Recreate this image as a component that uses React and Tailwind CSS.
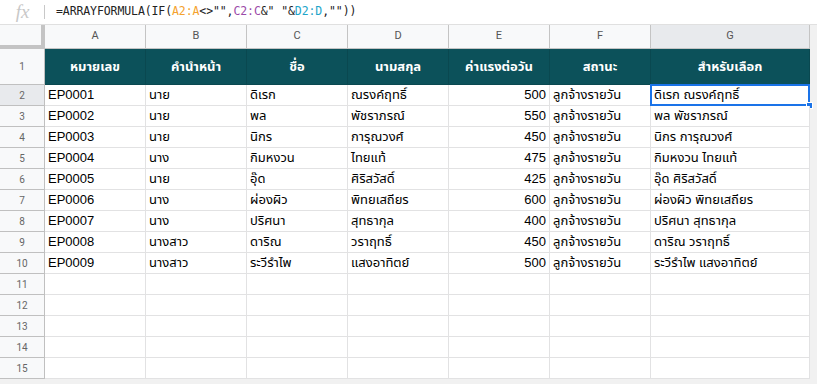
import React from "react";

const rows = [
  ["EP0001", "นาย", "ดิเรก", "ณรงค์ฤทธิ์", "500", "ลูกจ้างรายวัน", "ดิเรก ณรงค์ฤทธิ์"],
  ["EP0002", "นาย", "พล", "พัชราภรณ์", "550", "ลูกจ้างรายวัน", "พล พัชราภรณ์"],
  ["EP0003", "นาย", "นิกร", "การุณวงศ์", "450", "ลูกจ้างรายวัน", "นิกร การุณวงศ์"],
  ["EP0004", "นาง", "กิมหงวน", "ไทยแท้", "475", "ลูกจ้างรายวัน", "กิมหงวน ไทยแท้"],
  ["EP0005", "นาย", "อุ๊ด", "ศิริสวัสดิ์", "425", "ลูกจ้างรายวัน", "อุ๊ด ศิริสวัสดิ์"],
  ["EP0006", "นาง", "ผ่องผิว", "พิทยเสถียร", "600", "ลูกจ้างรายวัน", "ผ่องผิว พิทยเสถียร"],
  ["EP0007", "นาง", "ปริศนา", "สุทธากุล", "400", "ลูกจ้างรายวัน", "ปริศนา สุทธากุล"],
  ["EP0008", "นางสาว", "ดาริณ", "วราฤทธิ์", "450", "ลูกจ้างรายวัน", "ดาริณ วราฤทธิ์"],
  ["EP0009", "นางสาว", "ระวีรำไพ", "แสงอาทิตย์", "500", "ลูกจ้างรายวัน", "ระวีรำไพ แสงอาทิตย์"],
];

const headers = ["หมายเลข", "คำนำหน้า", "ชื่อ", "นามสกุล", "ค่าแรงต่อวัน", "สถานะ", "สำหรับเลือก"];
const letters = ["A", "B", "C", "D", "E", "F", "G"];
const widths = ["w-[101px]", "w-[101px]", "w-[101px]", "w-[101px]", "w-[101px]", "w-[101px]", "w-[159px]"];

const font = "font-['Liberation_Sans','Noto_Sans_Thai','Noto_Sans',sans-serif]";

function RowNum({ n, h, selected }) {
  return (
    <div
      className={`w-[45px] ${h} shrink-0 flex items-center justify-center border-r border-b border-r-[#c0c0c0] border-b-[#c0c0c0] text-[10px] text-[#666] font-['Roboto',sans-serif] ${
        selected ? "bg-[#e8eaed]" : "bg-[#f8f9fa]"
      }`}
    >
      {n}
    </div>
  );
}

export default function App() {
  return (
    <div className={`w-[817px] h-[384px] overflow-hidden bg-[#f1f1f1] ${font}`}>
      {/* formula bar */}
      <div className="h-[25px] bg-white border-b border-[#e0e0e0] flex items-center">
        <div className="w-[45px] h-full flex items-center justify-center relative">
          <span className="font-['Liberation_Serif',serif] italic text-[19px] text-[#c8c8c8] leading-none -mt-[2px]">fx</span>
          <div className="absolute right-0 top-[5px] w-px h-[14px] bg-[#c8c8c8]" />
        </div>
        <div className="ml-[11px] font-['DejaVu_Sans_Mono',monospace] text-[11.5px] text-[#222] whitespace-pre tracking-[-0.1px]">
          {'=ARRAYFORMULA(IF('}
          <span className="text-[#f4a22d]">A2:A</span>
          {'<>"",'}
          <span className="text-[#9b4aa8]">C2:C</span>
          {'&" "&'}
          <span className="text-[#1ea4c9]">D2:D</span>
          {',""))'}
        </div>
      </div>

      {/* column header */}
      <div className="flex h-[24px]">
        <div className="w-[45px] shrink-0 bg-[#f8f9fa] border-r-4 border-b-4 border-[#c4c4c4]" />
        {letters.map((l, i) => (
          <div
            key={l}
            className={`${widths[i]} shrink-0 flex items-center justify-center border-r border-b border-[#c4c4c4] text-[11px] text-[#555] font-['Roboto',sans-serif] ${
              l === "G" ? "bg-[#e8eaed]" : "bg-[#f8f9fa]"
            }`}
          >
            {l}
          </div>
        ))}
      </div>

      {/* row 1 header */}
      <div className="flex h-[36px]">
        <RowNum n={1} h="h-[36px]" />
        {headers.map((t, i) => (
          <div
            key={t}
            className={`${widths[i]} shrink-0 flex items-center justify-center bg-[#0c515a] border-r border-b border-[#0a4850] text-white font-bold text-[13px]`}
          >
            {t}
          </div>
        ))}
      </div>

      {/* data rows */}
      {rows.map((r, ri) => (
        <div key={ri} className="flex h-[21px]">
          <RowNum n={ri + 2} h="h-[21px]" selected={ri === 0} />
          {r.map((c, ci) => (
            <div
              key={ci}
              className={`${widths[ci]} shrink-0 bg-white border-r border-b border-[#e2e2e3] text-[13px] text-black flex items-center whitespace-nowrap overflow-visible relative ${
                ci === 4 ? "justify-end pr-[3px]" : "pl-[3px]"
              }`}
            >
              {c}
              {ri === 0 && ci === 6 && (
                <>
                  <div className="absolute -left-px -top-px -right-px -bottom-px border-2 border-[#1a73e8]" />
                  <div className="absolute -right-[4px] -bottom-[4px] w-[7px] h-[7px] bg-[#1a73e8] border border-white" />
                </>
              )}
            </div>
          ))}
        </div>
      ))}

      {/* empty rows */}
      {[11, 12, 13, 14, 15].map((n) => (
        <div key={n} className="flex h-[21px]">
          <RowNum n={n} h="h-[21px]" />
          {letters.map((l, i) => (
            <div key={l} className={`${widths[i]} shrink-0 bg-white border-r border-b border-[#e2e2e3]`} />
          ))}
        </div>
      ))}
    </div>
  );
}
